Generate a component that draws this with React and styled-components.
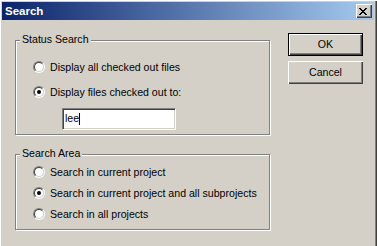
import React from "react";
import styled, { createGlobalStyle } from "styled-components";

const FACE = "#D4D0C8";

const GlobalStyle = createGlobalStyle`
  html, body { margin: 0; padding: 0; background: ${FACE}; }
  #root { width: 377px; height: 246px; }
`;

const Window = styled.div`
  box-sizing: border-box;
  width: 377px;
  height: 246px;
  overflow: hidden;
  background: ${FACE};
  padding: 2px 3px 0 2px;
  box-shadow: inset 1px 1px 0 #ffffff, inset -1px 0 0 #404040, inset -2px 0 0 #808080;
  font-family: "Liberation Sans", Arial, sans-serif;
  font-size: 10.6px;
  color: #000;
`;

const TitleBar = styled.div`
  display: flex;
  align-items: center;
  height: 18px;
  padding: 0 2px 0 3px;
  background: linear-gradient(to right, #0a246a, #a6caf0);
`;

const Title = styled.span`
  font-family: "Liberation Sans", Arial, sans-serif;
  font-weight: bold;
  font-size: 11.5px;
  color: #ffffff;
  line-height: 18px;
`;

const CloseButton = styled.div`
  box-sizing: border-box;
  margin-left: auto;
  width: 16px;
  height: 14px;
  background: ${FACE};
  box-shadow: inset 1px 1px 0 #ffffff, inset -1px -1px 0 #404040, inset -2px -2px 0 #808080;
  display: flex;
  align-items: flex-start;
  justify-content: flex-start;
  padding: 4px 0 0 3px;
  svg { display: block; }
`;

const Body = styled.div`
  display: flex;
  align-items: flex-start;
  padding-left: 13px;
`;

const LeftCol = styled.div`
  display: flex;
  flex-direction: column;
  gap: 19px;
  width: 255px;
  margin-top: 20px;
`;

const Group = styled.div`
  position: relative;
  box-sizing: border-box;
  width: 255px;
  height: ${(p) => p.$h}px;
  border: 1px solid #808080;
  box-shadow: 1px 1px 0 #ffffff, inset 1px 1px 0 #ffffff;
  display: flex;
  flex-direction: column;
  align-items: flex-start;
  gap: ${(p) => p.$gap}px;
  padding: ${(p) => p.$pt}px 0 0 17px;
`;

const GroupLabel = styled.span`
  position: absolute;
  top: -8px;
  left: 4px;
  padding: 0 2px 0 2px;
  line-height: 13px;
  background: ${FACE};
  white-space: nowrap;
`;

const Option = styled.div`
  display: flex;
  align-items: center;
  gap: 5px;
  height: 16px;
  line-height: 13px;
  white-space: nowrap;
`;

const RadioOuter = styled.span`
  box-sizing: border-box;
  width: 12px;
  height: 12px;
  border-radius: 50%;
  border: 1px solid;
  border-color: #808080 #ffffff #ffffff #808080;
  display: flex;
`;

const RadioInner = styled.span`
  box-sizing: border-box;
  flex: 1;
  border-radius: 50%;
  border: 1px solid;
  border-color: #404040 ${FACE} ${FACE} #404040;
  background: #ffffff;
  display: flex;
  align-items: center;
  justify-content: center;
`;

const Dot = styled.span`
  width: 4px;
  height: 4px;
  border-radius: 50%;
  background: #000;
`;

const Radio = ({ checked }) => (
  <RadioOuter>
    <RadioInner>{checked && <Dot />}</RadioInner>
  </RadioOuter>
);

const TextBox = styled.div`
  box-sizing: border-box;
  width: 114px;
  height: 22px;
  margin: -1px 0 0 29px;
  background: #ffffff;
  border: 1px solid;
  border-color: #808080 #ffffff #ffffff #808080;
  box-shadow: inset 1px 1px 0 #404040, inset -1px -1px 0 ${FACE};
  display: flex;
  align-items: center;
  padding: 0 0 1px 2px;
  line-height: 13px;
`;

const Caret = styled.span`
  display: inline-block;
  width: 1px;
  height: 12px;
  background: #000;
  margin-left: 0px;
`;

const ButtonCol = styled.div`
  display: flex;
  flex-direction: column;
  gap: 5px;
  margin: 13px 0 0 18px;
`;

const Button = styled.div`
  box-sizing: border-box;
  width: 75px;
  height: 23px;
  display: flex;
  align-items: center;
  justify-content: center;
  background: ${FACE};
  border: ${(p) => (p.$default ? "1px solid #000" : "none")};
  box-shadow: inset 1px 1px 0 #ffffff, inset -1px -1px 0 #404040, inset -2px -2px 0 #808080;
  line-height: 13px;
  padding-bottom: 1px;
`;

const CloseGlyph = () => {
  const rows = [
    [0, 1, 6, 7],
    [1, 2, 5, 6],
    [2, 3, 4, 5],
    [3, 4],
    [2, 3, 4, 5],
    [1, 2, 5, 6],
    [0, 1, 6, 7],
  ];
  return (
    <svg width="8" height="7" viewBox="0 0 8 7" shapeRendering="crispEdges">
      {rows.map((r, y) =>
        r.map((x) => <rect key={`${x}-${y}`} x={x} y={y} width="1" height="1" fill="#000" />)
      )}
    </svg>
  );
};

export default function App() {
  return (
    <>
      <GlobalStyle />
      <Window>
        <TitleBar>
          <Title>Search</Title>
          <CloseButton>
            <CloseGlyph />
          </CloseButton>
        </TitleBar>
        <Body>
          <LeftCol>
            <Group $h={95} $pt={18} $gap={9}>
              <GroupLabel>Status Search</GroupLabel>
              <Option>
                <Radio />
                <span>Display all checked out files</span>
              </Option>
              <Option>
                <Radio checked />
                <span>Display files checked out to:</span>
              </Option>
              <TextBox>
                lee
                <Caret />
              </TextBox>
            </Group>
            <Group $h={76} $pt={9} $gap={5}>
              <GroupLabel>Search Area</GroupLabel>
              <Option>
                <Radio />
                <span>Search in current project</span>
              </Option>
              <Option>
                <Radio checked />
                <span>Search in current project and all subprojects</span>
              </Option>
              <Option>
                <Radio />
                <span>Search in all projects</span>
              </Option>
            </Group>
          </LeftCol>
          <ButtonCol>
            <Button $default>OK</Button>
            <Button>Cancel</Button>
          </ButtonCol>
        </Body>
      </Window>
    </>
  );
}
